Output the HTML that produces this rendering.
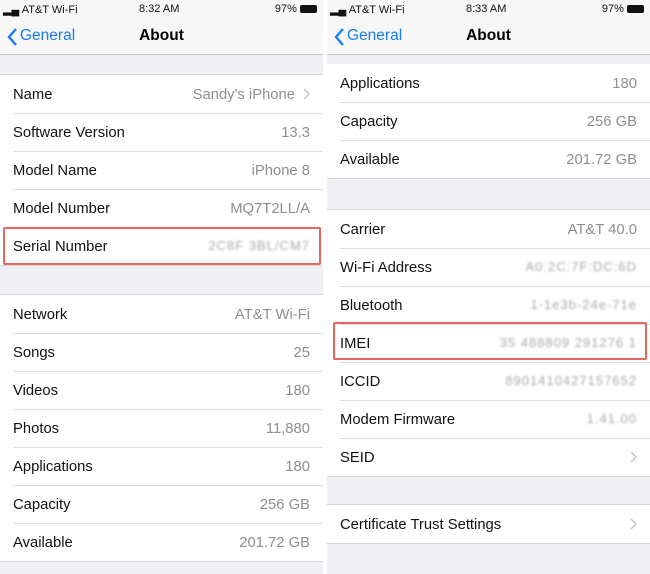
<!DOCTYPE html><html><head><meta charset="utf-8"><style>
*{margin:0;padding:0;box-sizing:border-box}
body{width:650px;height:574px;background:#fff;font-family:"Liberation Sans",Arial,sans-serif;position:relative;overflow:hidden}
.p{position:absolute;top:0;width:323px;height:574px;background:#efeff4;overflow:hidden}
.sb{position:absolute;top:0;left:0;right:0;height:18px;background:#f7f7f7;font-size:11px;color:#111}
.nav{position:absolute;top:18px;left:0;right:0;height:37px;background:#f7f7f7;border-bottom:1px solid #c8c8cc}
.nav .t{position:absolute;left:0;right:0;text-align:center;top:9px;font-weight:bold;font-size:15.5px}
.nav .b{position:absolute;left:20px;top:9px;color:#1a7cf5;font-size:15.5px}
.nav svg{position:absolute;left:6px;top:9px}
.g{position:absolute;left:0;right:0;background:#fff;border-top:1px solid #d6d6da;border-bottom:1px solid #d6d6da}
.r{height:38px;position:relative;font-size:14.8px;color:#111;line-height:40px;padding-left:13px}
.r+.r:before{content:"";position:absolute;left:13px;right:0;top:0;border-top:1px solid #dcdce0}
.v{position:absolute;right:13px;top:0;color:#8e8e93}
.bl{filter:blur(1px);color:#a8a8ac;font-size:13px;letter-spacing:1px;line-height:37px}
.ch{display:inline-block;width:7px;height:12px;margin-left:8px;vertical-align:-1px}
.red{position:absolute;border:2px solid #e8665e;border-radius:2px}
</style></head><body>
<div class="p" style="left:0">
<div class="sb"><span style="position:absolute;left:3px;top:3px">▂▄ AT&amp;T Wi-Fi</span><span style="position:absolute;left:139px;top:3px">8:32 AM</span><span style="position:absolute;right:6px;top:3px">97% <span style="display:inline-block;width:17px;height:8px;background:#111;border-radius:2px;vertical-align:-1px"></span></span></div>
<div class="nav"><svg width="12" height="20"><path d="M10 2L3 10L10 18" stroke="#1a7cf5" stroke-width="2.4" fill="none"/></svg><span class="b">General</span><div class="t">About</div></div>
<div class="g" style="top:74px">
<div class="r">Name<span class="v">Sandy's iPhone<svg class="ch" viewBox="0 0 7 12"><path d="M1 1l5 5-5 5" stroke="#c4c4c8" stroke-width="1.5" fill="none"/></svg></span></div>
<div class="r">Software Version<span class="v">13.3</span></div>
<div class="r">Model Name<span class="v">iPhone 8</span></div>
<div class="r">Model Number<span class="v">MQ7T2LL/A</span></div>
<div class="r">Serial Number<span class="v bl">2C8F 3BL/CM7</span></div>
</div>
<div class="g" style="top:294px">
<div class="r">Network<span class="v">AT&amp;T Wi-Fi</span></div>
<div class="r">Songs<span class="v">25</span></div>
<div class="r">Videos<span class="v">180</span></div>
<div class="r">Photos<span class="v">11,880</span></div>
<div class="r">Applications<span class="v">180</span></div>
<div class="r">Capacity<span class="v">256 GB</span></div>
<div class="r">Available<span class="v">201.72 GB</span></div>
</div>
<div class="red" style="left:3px;top:227px;width:318px;height:38px"></div>
</div>
<div class="p" style="left:327px">
<div class="g" style="top:64px;border-top:none">
<div class="r">Applications<span class="v">180</span></div>
<div class="r">Capacity<span class="v">256 GB</span></div>
<div class="r">Available<span class="v">201.72 GB</span></div>
</div>
<div class="sb"><span style="position:absolute;left:3px;top:3px">▂▄ AT&amp;T Wi-Fi</span><span style="position:absolute;left:139px;top:3px">8:33 AM</span><span style="position:absolute;right:6px;top:3px">97% <span style="display:inline-block;width:17px;height:8px;background:#111;border-radius:2px;vertical-align:-1px"></span></span></div>
<div class="nav"><svg width="12" height="20"><path d="M10 2L3 10L10 18" stroke="#1a7cf5" stroke-width="2.4" fill="none"/></svg><span class="b">General</span><div class="t">About</div></div>
<div class="g" style="top:209px">
<div class="r">Carrier<span class="v">AT&amp;T 40.0</span></div>
<div class="r">Wi-Fi Address<span class="v bl">A0:2C:7F:DC:6D</span></div>
<div class="r">Bluetooth<span class="v bl">1-1e3b-24e-71e</span></div>
<div class="r">IMEI<span class="v bl">35 488809 291276 1</span></div>
<div class="r">ICCID<span class="v bl">8901410427157652</span></div>
<div class="r">Modem Firmware<span class="v bl">1.41.00</span></div>
<div class="r">SEID<span class="v"><svg class="ch" viewBox="0 0 7 12"><path d="M1 1l5 5-5 5" stroke="#c4c4c8" stroke-width="1.5" fill="none"/></svg></span></div>
</div>
<div class="g" style="top:504px">
<div class="r">Certificate Trust Settings<span class="v"><svg class="ch" viewBox="0 0 7 12"><path d="M1 1l5 5-5 5" stroke="#c4c4c8" stroke-width="1.5" fill="none"/></svg></span></div>
</div>
<div class="red" style="left:6px;top:322px;width:314px;height:38px"></div>
</div>
</body></html>
